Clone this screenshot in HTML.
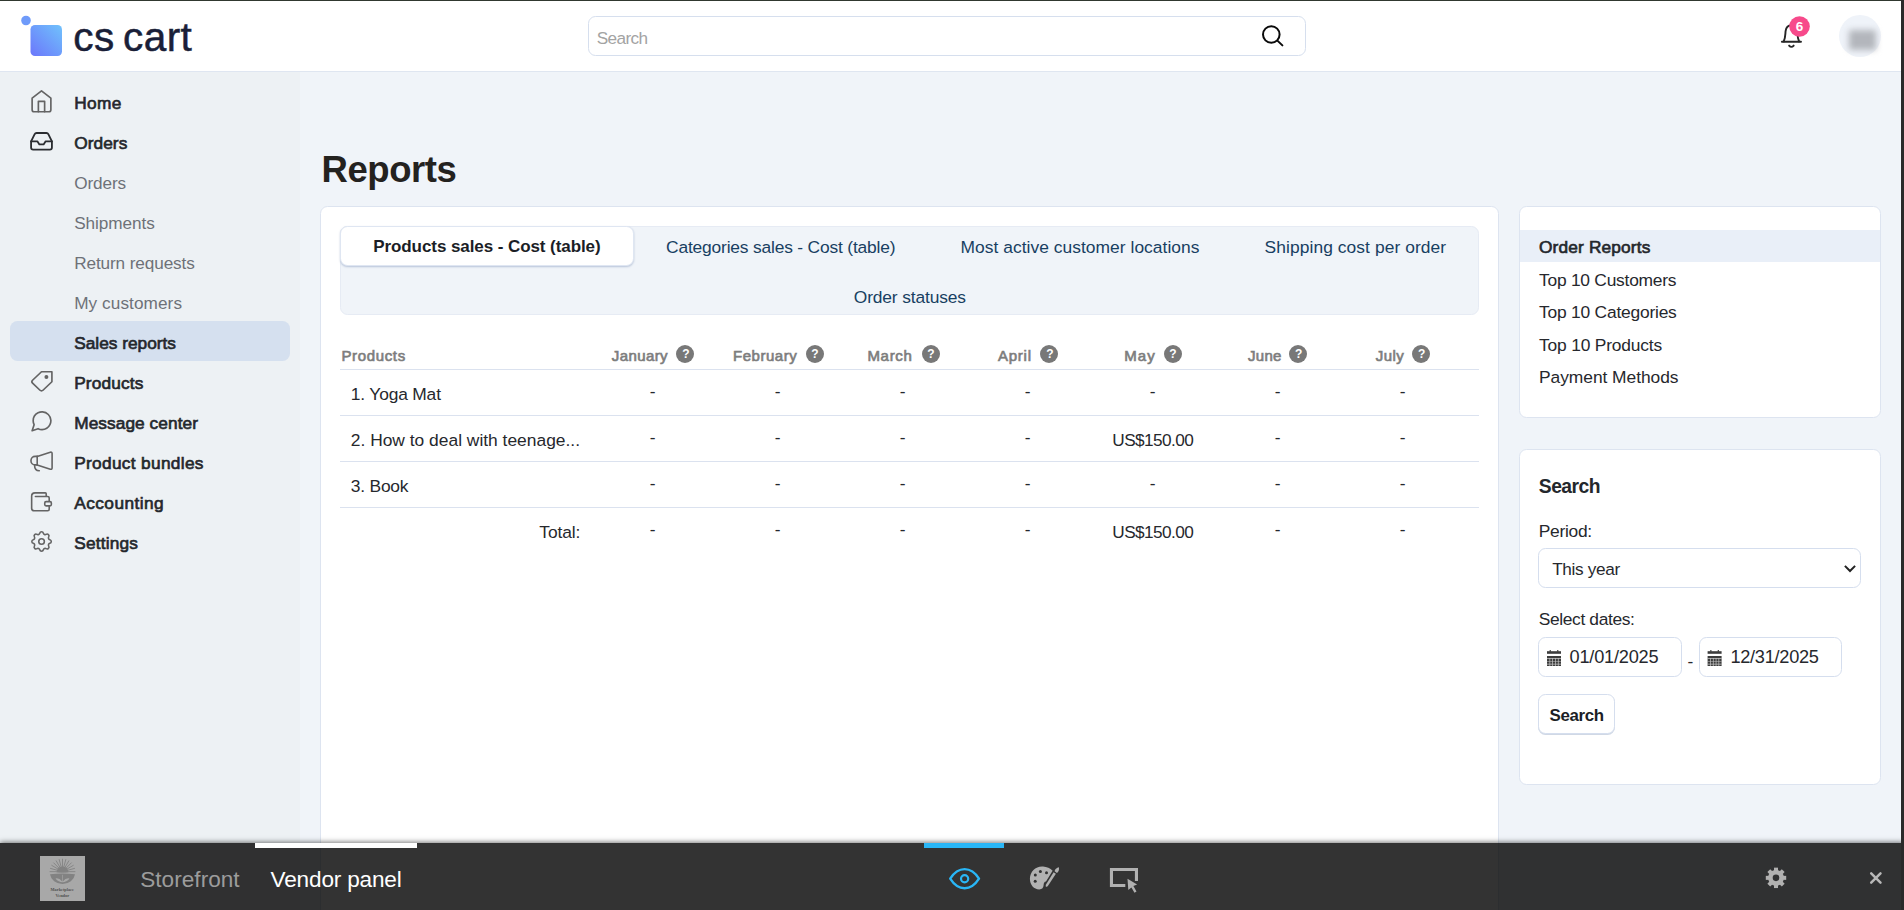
<!DOCTYPE html>
<html lang="en"><head><meta charset="utf-8"><title>Reports - CS-Cart</title>
<style>
*{box-sizing:border-box;margin:0;padding:0}
html,body{width:1904px;height:910px;overflow:hidden}
body{position:relative;background:#f0f4f9;font-family:"Liberation Sans",sans-serif;color:#222}
.abs{position:absolute}
.t{position:absolute;white-space:pre;line-height:0;font-family:"Liberation Sans",sans-serif}
#topline{left:0;top:0;width:1904px;height:1px;background:#30382f}
#rightstrip{left:1901px;top:0;width:3px;height:910px;background:#2a2a2a}
#header{left:0;top:1px;width:1901px;height:70px;background:#fff}
#hborder{left:0;top:71px;width:1901px;height:1px;background:#dfe6f1}
#sidebar{left:0;top:72px;width:300px;height:838px;background:#edf1f4}
#active{left:10px;top:321px;width:280px;height:40px;border-radius:7.5px;background:#d5e0ef}
#searchbox{left:588px;top:16px;width:718px;height:40px;border:1px solid #d6dfee;border-radius:7.5px;background:#fff}
.card{background:#fff;border:1px solid #dde4f0;border-radius:7.5px}
#maincard{left:320px;top:206px;width:1179px;height:720px}
#tabs{left:340px;top:226px;width:1139px;height:89px;background:#f0f4f9;border:1px solid #e6ebf4;border-radius:7.5px}
#tabactive{left:340px;top:226px;width:294px;height:40px;background:#fff;border:1px solid #dfe6f2;border-radius:7.5px;box-shadow:0 1px 2px rgba(100,125,170,.4)}
.hl{left:340px;width:1139px;height:1px;background:#dbe2ef}
.q{width:18px;height:18px;border-radius:50%;background:#787878;top:345px}
#p1{left:1519px;top:206px;width:362px;height:212px}
#p1hl{left:1520px;top:230px;width:360px;height:32px;background:#e9eff8}
#p2{left:1519px;top:449px;width:362px;height:336px}
.inp{background:#fff;border:1px solid #d5deee;border-radius:7.5px}
#bar{left:0;top:843px;width:1904px;height:67px;background:rgba(0,0,0,.8);box-shadow:0 -1px 5px rgba(0,0,0,.52)}

</style></head>
<body>
<div class="abs" id="header"></div>
<div class="abs" id="hborder"></div>
<div class="abs" id="sidebar"></div>
<div class="abs" id="active"></div>
<div class="abs" id="searchbox"></div>
<div class="abs card" id="maincard"></div>
<div class="abs" id="tabs"></div>
<div class="abs" id="tabactive"></div>
<div class="abs hl" style="top:369px"></div>
<div class="abs hl" style="top:415px"></div>
<div class="abs hl" style="top:461px"></div>
<div class="abs hl" style="top:507px"></div>
<div class="abs card" id="p1"></div>
<div class="abs" id="p1hl"></div>
<div class="abs card" id="p2"></div>
<div class="abs inp" style="left:1538px;top:548px;width:323px;height:40px"></div>
<div class="abs inp" style="left:1538px;top:637px;width:144px;height:40px"></div>
<div class="abs inp" style="left:1699px;top:637px;width:143px;height:40px"></div>
<div class="abs inp" style="left:1538px;top:694px;width:77px;height:40px;box-shadow:0 1px 0 rgba(100,125,170,.3)"></div>
<div class="abs q" style="left:676.4px"></div>
<div class="abs q" style="left:805.5px"></div>
<div class="abs q" style="left:921.5px"></div>
<div class="abs q" style="left:1040.4px"></div>
<div class="abs q" style="left:1163.5px"></div>
<div class="abs q" style="left:1289.3px"></div>
<div class="abs q" style="left:1412.2px"></div>
<div class="abs" style="left:1839.2px;top:15.3px;width:42px;height:42px;border-radius:50%;background:#eff3f9"></div>
<div class="abs" style="left:1849px;top:29.5px;width:27px;height:20px;background:#b3b6bc;filter:blur(3px);border-radius:2px"></div>
<svg class="abs" style="left:0;top:0" width="1904" height="910" viewBox="0 0 1904 910" fill="none" stroke-linecap="round" stroke-linejoin="round">
<defs><linearGradient id="lg" x1="0" y1="1" x2="1" y2="0"><stop offset="0" stop-color="#6b76fb"/><stop offset="1" stop-color="#70c2fc"/></linearGradient></defs>
<!-- logo -->
<circle cx="26" cy="20.5" r="4.8" fill="#6f9bfa"/>
<rect x="30.5" y="25" width="31.5" height="31" rx="4.5" fill="url(#lg)"/>
<!-- search -->
<g stroke="#0a0a0a" stroke-width="2"><circle cx="1271.3" cy="34.5" r="8.3"/><path d="M1277.4 40.6L1282.4 45.4"/></g>
<!-- bell -->
<g stroke="#262626" stroke-width="1.9"><path d="M1781.9 41.8H1801"/><path d="M1783.7 41.5C1785.6 37.5 1785.2 34 1785.6 31.2C1786.1 27.4 1788.5 25.3 1791.4 25.3C1794.3 25.3 1796.7 27.4 1797.2 31.2C1797.6 34 1797.2 37.5 1799.1 41.5"/><path d="M1789.1 45.6Q1791.4 48.2 1793.7 45.6"/></g>
<circle cx="1799.5" cy="26.5" r="10.3" fill="#f74a8b"/>
<!-- sidebar icons -->
<g stroke="#646464" stroke-width="1.6">
 <g transform="translate(29 88.8) scale(1.0417)"><path d="M3 9l9-7 9 7v11a2 2 0 0 1-2 2H5a2 2 0 0 1-2-2z"/><path d="M9 22V12h6v10"/></g>
 <g transform="translate(54 369.7) scale(-1.0417 1.0)"><path d="M20.59 13.41l-7.17 7.17a2 2 0 0 1-2.83 0L2 12V2h10l8.59 8.59a2 2 0 0 1 0 2.82z"/><circle cx="7.3" cy="7.3" r="1.9" fill="#646464" stroke="none"/></g>
 <g transform="translate(29 408.8) scale(1.0417)"><path d="M21 11.5a8.38 8.38 0 0 1-.9 3.8 8.5 8.5 0 0 1-7.6 4.7 8.38 8.38 0 0 1-3.8-.9L3 21l1.9-5.7a8.38 8.38 0 0 1-.9-3.8 8.5 8.5 0 0 1 4.7-7.6 8.38 8.38 0 0 1 3.8-.9h.5a8.48 8.48 0 0 1 8 8v.5z"/></g>
 <g stroke-width="1.6"><path d="M37.2 456.4H35.2A4.25 4.25 0 0 0 35.2 464.9H37.2"/><path d="M37.2 456.4V464.9"/><path d="M37.2 456.4L50.3 452.2Q52.1 451.7 52.1 453.6V467.8Q52.1 469.7 50.3 469.2L37.2 464.9"/><path d="M34.6 465.4C34.6 468.5 36.5 470.6 39.3 470.8"/></g>
 <g stroke-width="1.6"><path d="M46.2 496.3V493.7Q46.2 492.85 45.4 492.85H35Q31.65 492.85 31.65 496.2V508.2Q31.65 510.75 34.3 510.75H47.7Q49.2 510.75 49.2 509.3V506.6M49.2 500.9V498Q49.2 496.5 47.7 496.5H35.4"/><rect x="44.75" y="501.6" width="6.6" height="4.3" rx="1.3"/></g>
 <g transform="translate(28.6 528.55) scale(1.08)" stroke-width="1.45"><path d="M10.325 4.317c.426 -1.756 2.924 -1.756 3.35 0a1.724 1.724 0 0 0 2.573 1.066c1.543 -.94 3.31 .826 2.37 2.37a1.724 1.724 0 0 0 1.065 2.572c1.756 .426 1.756 2.924 0 3.35a1.724 1.724 0 0 0 -1.066 2.573c.94 1.543 -.826 3.31 -2.37 2.37a1.724 1.724 0 0 0 -2.572 1.065c-.426 1.756 -2.924 1.756 -3.35 0a1.724 1.724 0 0 0 -2.573 -1.066c-1.543 .94 -3.31 -.826 -2.37 -2.37a1.724 1.724 0 0 0 -1.065 -2.572c-1.756 -.426 -1.756 -2.924 0 -3.35a1.724 1.724 0 0 0 1.066 -2.573c-.94 -1.543 .826 -3.31 2.37 -2.37c1 .608 2.296 .07 2.572 -1.065z"/><circle cx="12" cy="12" r="2.6"/></g>
</g>
<g stroke="#2b2d31" stroke-width="1.75" transform="translate(29 128.8) scale(1.0417)"><path d="M22 12h-6l-2 3h-4l-2-3H2"/><path d="M5.45 5.11L2 12v6a2 2 0 0 0 2 2h16a2 2 0 0 0 2-2v-6l-3.45-6.89A2 2 0 0 0 16.76 4H7.24a2 2 0 0 0-1.79 1.11z"/></g>
<!-- select chevron -->
<path d="M1844.9 565.9L1850 571L1855.1 565.9" stroke="#222" stroke-width="2" stroke-linecap="butt" stroke-linejoin="miter"/>
<!-- calendar icons -->
<g fill="#3c3c3c" stroke="none"><rect x="1547" y="651.2" width="14" height="2.6"/><rect x="1549.6" y="650.1" width="1.3" height="1.6"/><rect x="1557.1" y="650.1" width="1.3" height="1.6"/><rect x="1547" y="656" width="14" height="10"/><path d="M1547 658.1h14v.7h-14zM1547 660.9h14v.7h-14zM1547 663.7h14v.7h-14zM1549.5 658.1h.7v7.900h-.7zM1552.3 658.1h.7v7.900h-.7zM1555.1 658.1h.7v7.900h-.7zM1557.9 658.1h.7v7.900h-.7z" fill="#fff" opacity=".7"/></g>
<g transform="translate(160.6 0)" fill="#3c3c3c" stroke="none"><rect x="1547" y="651.2" width="14" height="2.6"/><rect x="1549.6" y="650.1" width="1.3" height="1.6"/><rect x="1557.1" y="650.1" width="1.3" height="1.6"/><rect x="1547" y="656" width="14" height="10"/><path d="M1547 658.1h14v.7h-14zM1547 660.9h14v.7h-14zM1547 663.7h14v.7h-14zM1549.5 658.1h.7v7.900h-.7zM1552.3 658.1h.7v7.900h-.7zM1555.1 658.1h.7v7.900h-.7zM1557.9 658.1h.7v7.900h-.7z" fill="#fff" opacity=".7"/></g>
</svg>

<div class="abs" id="bar"></div>
<div class="abs" id="topline"></div>
<div class="abs" id="rightstrip"></div>
<svg class="abs" style="left:0;top:830px" width="1904" height="80" viewBox="0 830 1904 80" fill="none" stroke-linecap="round" stroke-linejoin="round">
<rect x="255" y="843" width="162" height="5" fill="#fff"/>
<rect x="924" y="843" width="80" height="5" fill="#29b6f6"/>
<!-- thumb -->
<rect x="40" y="856" width="45" height="45" fill="#a8a8a8"/>
<g stroke="#828282" stroke-width="0.9" stroke-linecap="butt">
<path d="M49.6 871.7H75.4M50.1 868.3L74.9 875.1M50.1 875.1L74.9 868.3M51.4 865.2L73.6 878.2M53.4 862.6L71.6 880.8M56 860.5L69 882.9M59.1 859.2L65.9 884.2M62.5 858.8V884.6M65.9 859.2L59.1 884.2M69 860.5L56 882.9M71.6 862.6L53.4 880.8M73.6 865.2L51.4 878.2"/>
</g>
<path d="M48 872.6H77V890H48z" fill="#a8a8a8"/>
<path d="M56.7 872.2A5.8 5.8 0 0 1 68.3 872.2z" fill="#828282"/>
<path d="M50 874.3Q62.5 872.6 75 874.3A12.6 11 0 0 1 50 874.3z" fill="#828282"/>
<path d="M55.5 878.5Q59 877.5 62.2 881.5V874.8L62.8 874.8V881.5Q66 877.5 69.5 878.5Q66.5 882.3 62.5 882.3Q58.500 882.3 55.5 878.5z" fill="#a8a8a8"/>
<g fill="#505050" font-family="'Liberation Serif',serif" font-weight="700" text-anchor="middle" stroke="none"><text transform="translate(62.2 891.3) scale(.43)" font-size="10" textLength="54" lengthAdjust="spacingAndGlyphs">Marketplace</text><text transform="translate(62.3 897) scale(.43)" font-size="10" textLength="32" lengthAdjust="spacingAndGlyphs">Vendor</text></g>
<!-- eye -->
<g stroke="#29b6f6" stroke-width="2.4"><path d="M950.2 878.6C954 872.6 959 869.1 964.6 869.1C970.2 869.1 975.2 872.6 979 878.6C975.2 884.6 970.2 888.2 964.6 888.2C959 888.2 954 884.6 950.2 878.6z"/><circle cx="964.6" cy="878.7" r="3.6" stroke-width="2.2"/></g>
<!-- palette -->
<g fill="#b1b1b1"><path d="M1043 866.6C1036 866 1029.900 871.500 1029.900 878.800C1029.900 885 1034 889.400 1039.200 889.400C1042.300 889.400 1043.500 887.300 1043.600 885.200C1043.700 883.200 1044.300 881.800 1046 881.600L1052.600 870.800C1050.300 868.200 1046.800 866.900 1043 866.600z"/><path d="M1053.600 872.300L1055.900 873.800L1047.700 886.200L1045.900 886.900L1045.700 884.900z"/><path d="M1054.600 871.300C1054.900 869.300 1056.600 867.800 1058.900 867.300C1059.400 869.600 1058.700 871.900 1056.900 873z"/></g>
<g fill="#323232"><circle cx="1040.400" cy="871.400" r="1.5"/><circle cx="1046.500" cy="872.700" r="1.5"/><circle cx="1035.300" cy="875.100" r="1.5"/><circle cx="1035.200" cy="881.200" r="1.5"/></g>
<!-- monitor cursor -->
<path d="M1125.300 885.450H1111.450V869.450H1136.450V881" stroke="#b1b1b1" stroke-width="3.100" stroke-linecap="butt" stroke-linejoin="miter"/>
<path d="M1127.500 878.700L1137.100 884.400L1133.400 886.100L1136.500 891.400L1134.500 892.700L1131.400 887.400L1128.300 889.900z" fill="#b1b1b1"/>
<!-- gear -->
<g transform="translate(1776 877.850)"><circle r="5.600" stroke="#b1b1b1" stroke-width="4.600"/><g fill="#b1b1b1"><rect x="-2" y="-10.200" width="4" height="4" /><rect x="-2" y="6.200" width="4" height="4"/><rect x="-10.200" y="-2" width="4" height="4"/><rect x="6.200" y="-2" width="4" height="4"/><g transform="rotate(45)"><rect x="-2" y="-10.200" width="4" height="4" /><rect x="-2" y="6.200" width="4" height="4"/><rect x="-10.200" y="-2" width="4" height="4"/><rect x="6.200" y="-2" width="4" height="4"/></g></g></g>
<!-- close -->
<path d="M1871.2 873.4L1880.5 882.7M1880.5 873.4L1871.2 882.7" stroke="#b8b8b8" stroke-width="2.5" stroke-linecap="round"/>
</svg>


<div id="texts">
<span class="t" style="left:74.20px;top:102.61px;font-size:17.3px;font-weight:400;color:#24272c;letter-spacing:0.398px;-webkit-text-stroke:0.65px #24272c;">Home</span>
<span class="t" style="left:74.20px;top:142.61px;font-size:17.3px;font-weight:400;color:#24272c;letter-spacing:0.062px;-webkit-text-stroke:0.65px #24272c;">Orders</span>
<span class="t" style="left:74.20px;top:182.64px;font-size:17.2px;font-weight:400;color:#6e7178;letter-spacing:-0.122px;">Orders</span>
<span class="t" style="left:74.20px;top:222.64px;font-size:17.2px;font-weight:400;color:#6e7178;letter-spacing:-0.058px;">Shipments</span>
<span class="t" style="left:74.20px;top:262.64px;font-size:17.2px;font-weight:400;color:#6e7178;letter-spacing:-0.120px;">Return requests</span>
<span class="t" style="left:74.20px;top:302.64px;font-size:17.2px;font-weight:400;color:#6e7178;letter-spacing:0.078px;">My customers</span>
<span class="t" style="left:74.20px;top:342.61px;font-size:17.3px;font-weight:400;color:#24272c;letter-spacing:-0.002px;-webkit-text-stroke:0.65px #24272c;">Sales reports</span>
<span class="t" style="left:74.20px;top:382.61px;font-size:17.3px;font-weight:400;color:#24272c;letter-spacing:0.150px;-webkit-text-stroke:0.65px #24272c;">Products</span>
<span class="t" style="left:74.20px;top:422.61px;font-size:17.3px;font-weight:400;color:#24272c;letter-spacing:0.060px;-webkit-text-stroke:0.65px #24272c;">Message center</span>
<span class="t" style="left:74.20px;top:462.61px;font-size:17.3px;font-weight:400;color:#24272c;letter-spacing:0.313px;-webkit-text-stroke:0.65px #24272c;">Product bundles</span>
<span class="t" style="left:74.20px;top:502.61px;font-size:17.3px;font-weight:400;color:#24272c;letter-spacing:0.448px;-webkit-text-stroke:0.65px #24272c;">Accounting</span>
<span class="t" style="left:74.20px;top:542.61px;font-size:17.3px;font-weight:400;color:#24272c;letter-spacing:0.181px;-webkit-text-stroke:0.65px #24272c;">Settings</span>
<span class="t" style="left:596.80px;top:38.14px;font-size:17.2px;font-weight:400;color:#a3a3a3;letter-spacing:-0.645px;">Search</span>
<span class="t" style="left:321.50px;top:170.35px;font-size:36.5px;font-weight:700;color:#24221f;letter-spacing:-0.417px;">Reports</span>
<span class="t" style="left:373.20px;top:247.31px;font-size:17px;font-weight:700;color:#1b1e26;letter-spacing:-0.075px;">Products sales - Cost (table)</span>
<span class="t" style="left:666.10px;top:247.17px;font-size:17.4px;font-weight:400;color:#183f62;letter-spacing:-0.183px;">Categories sales - Cost (table)</span>
<span class="t" style="left:960.50px;top:247.17px;font-size:17.4px;font-weight:400;color:#183f62;letter-spacing:0.041px;">Most active customer locations</span>
<span class="t" style="left:1264.60px;top:247.17px;font-size:17.4px;font-weight:400;color:#183f62;letter-spacing:0.078px;">Shipping cost per order</span>
<span class="t" style="left:853.80px;top:297.17px;font-size:17.4px;font-weight:400;color:#183f62;letter-spacing:-0.147px;">Order statuses</span>
<span class="t" style="left:341.40px;top:355.60px;font-size:15px;font-weight:400;color:#7d7d7d;letter-spacing:0.650px;-webkit-text-stroke:0.65px #7d7d7d;">Products</span>
<span class="t" style="left:611.80px;top:355.50px;font-size:15px;font-weight:400;color:#7d7d7d;letter-spacing:0.404px;-webkit-text-stroke:0.65px #7d7d7d;">January</span>
<span class="t" style="left:733.00px;top:355.50px;font-size:15px;font-weight:400;color:#7d7d7d;letter-spacing:0.534px;-webkit-text-stroke:0.65px #7d7d7d;">February</span>
<span class="t" style="left:867.40px;top:355.50px;font-size:15px;font-weight:400;color:#7d7d7d;letter-spacing:0.703px;-webkit-text-stroke:0.65px #7d7d7d;">March</span>
<span class="t" style="left:997.90px;top:355.50px;font-size:15px;font-weight:400;color:#7d7d7d;letter-spacing:0.797px;-webkit-text-stroke:0.65px #7d7d7d;">April</span>
<span class="t" style="left:1124.20px;top:355.50px;font-size:15px;font-weight:400;color:#7d7d7d;letter-spacing:1.085px;-webkit-text-stroke:0.65px #7d7d7d;">May</span>
<span class="t" style="left:1248.00px;top:355.50px;font-size:15px;font-weight:400;color:#7d7d7d;letter-spacing:0.292px;-webkit-text-stroke:0.65px #7d7d7d;">June</span>
<span class="t" style="left:1375.70px;top:355.50px;font-size:15px;font-weight:400;color:#7d7d7d;letter-spacing:0.453px;-webkit-text-stroke:0.65px #7d7d7d;">July</span>
<span class="t" style="left:350.80px;top:393.87px;font-size:17.4px;font-weight:400;color:#26282d;letter-spacing:-0.170px;">1. Yoga Mat</span>
<span class="t" style="left:350.80px;top:439.87px;font-size:17.4px;font-weight:400;color:#26282d;letter-spacing:0.002px;">2. How to deal with teenage...</span>
<span class="t" style="left:350.80px;top:485.87px;font-size:17.4px;font-weight:400;color:#26282d;letter-spacing:-0.212px;">3. Book</span>
<span class="t" style="left:539.30px;top:531.87px;font-size:17.4px;font-weight:400;color:#26282d;letter-spacing:-0.096px;">Total:</span>
<span class="t" style="left:649.85px;top:391.27px;font-size:17.4px;font-weight:400;color:#26282d;letter-spacing:-0.297px;">-</span>
<span class="t" style="left:774.85px;top:391.27px;font-size:17.4px;font-weight:400;color:#26282d;letter-spacing:-0.297px;">-</span>
<span class="t" style="left:899.85px;top:391.27px;font-size:17.4px;font-weight:400;color:#26282d;letter-spacing:-0.297px;">-</span>
<span class="t" style="left:1024.85px;top:391.27px;font-size:17.4px;font-weight:400;color:#26282d;letter-spacing:-0.297px;">-</span>
<span class="t" style="left:1149.85px;top:391.27px;font-size:17.4px;font-weight:400;color:#26282d;letter-spacing:-0.297px;">-</span>
<span class="t" style="left:1274.85px;top:391.27px;font-size:17.4px;font-weight:400;color:#26282d;letter-spacing:-0.297px;">-</span>
<span class="t" style="left:1399.85px;top:391.27px;font-size:17.4px;font-weight:400;color:#26282d;letter-spacing:-0.297px;">-</span>
<span class="t" style="left:649.85px;top:437.27px;font-size:17.4px;font-weight:400;color:#26282d;letter-spacing:-0.297px;">-</span>
<span class="t" style="left:774.85px;top:437.27px;font-size:17.4px;font-weight:400;color:#26282d;letter-spacing:-0.297px;">-</span>
<span class="t" style="left:899.85px;top:437.27px;font-size:17.4px;font-weight:400;color:#26282d;letter-spacing:-0.297px;">-</span>
<span class="t" style="left:1024.85px;top:437.27px;font-size:17.4px;font-weight:400;color:#26282d;letter-spacing:-0.297px;">-</span>
<span class="t" style="left:1112.30px;top:439.94px;font-size:17.2px;font-weight:400;color:#26282d;letter-spacing:-0.557px;">US$150.00</span>
<span class="t" style="left:1274.85px;top:437.27px;font-size:17.4px;font-weight:400;color:#26282d;letter-spacing:-0.297px;">-</span>
<span class="t" style="left:1399.85px;top:437.27px;font-size:17.4px;font-weight:400;color:#26282d;letter-spacing:-0.297px;">-</span>
<span class="t" style="left:649.85px;top:483.27px;font-size:17.4px;font-weight:400;color:#26282d;letter-spacing:-0.297px;">-</span>
<span class="t" style="left:774.85px;top:483.27px;font-size:17.4px;font-weight:400;color:#26282d;letter-spacing:-0.297px;">-</span>
<span class="t" style="left:899.85px;top:483.27px;font-size:17.4px;font-weight:400;color:#26282d;letter-spacing:-0.297px;">-</span>
<span class="t" style="left:1024.85px;top:483.27px;font-size:17.4px;font-weight:400;color:#26282d;letter-spacing:-0.297px;">-</span>
<span class="t" style="left:1149.85px;top:483.27px;font-size:17.4px;font-weight:400;color:#26282d;letter-spacing:-0.297px;">-</span>
<span class="t" style="left:1274.85px;top:483.27px;font-size:17.4px;font-weight:400;color:#26282d;letter-spacing:-0.297px;">-</span>
<span class="t" style="left:1399.85px;top:483.27px;font-size:17.4px;font-weight:400;color:#26282d;letter-spacing:-0.297px;">-</span>
<span class="t" style="left:649.85px;top:529.27px;font-size:17.4px;font-weight:400;color:#26282d;letter-spacing:-0.297px;">-</span>
<span class="t" style="left:774.85px;top:529.27px;font-size:17.4px;font-weight:400;color:#26282d;letter-spacing:-0.297px;">-</span>
<span class="t" style="left:899.85px;top:529.27px;font-size:17.4px;font-weight:400;color:#26282d;letter-spacing:-0.297px;">-</span>
<span class="t" style="left:1024.85px;top:529.27px;font-size:17.4px;font-weight:400;color:#26282d;letter-spacing:-0.297px;">-</span>
<span class="t" style="left:1112.30px;top:531.94px;font-size:17.2px;font-weight:400;color:#26282d;letter-spacing:-0.557px;">US$150.00</span>
<span class="t" style="left:1274.85px;top:529.27px;font-size:17.4px;font-weight:400;color:#26282d;letter-spacing:-0.297px;">-</span>
<span class="t" style="left:1399.85px;top:529.27px;font-size:17.4px;font-weight:400;color:#26282d;letter-spacing:-0.297px;">-</span>
<span class="t" style="left:1539.00px;top:247.21px;font-size:17.3px;font-weight:400;color:#24272c;letter-spacing:0.154px;-webkit-text-stroke:0.65px #24272c;">Order Reports</span>
<span class="t" style="left:1539.00px;top:279.97px;font-size:17.4px;font-weight:400;color:#26282d;letter-spacing:-0.239px;">Top 10 Customers</span>
<span class="t" style="left:1539.00px;top:312.37px;font-size:17.4px;font-weight:400;color:#26282d;letter-spacing:-0.209px;">Top 10 Categories</span>
<span class="t" style="left:1539.00px;top:344.77px;font-size:17.4px;font-weight:400;color:#26282d;letter-spacing:-0.179px;">Top 10 Products</span>
<span class="t" style="left:1539.00px;top:376.97px;font-size:17.4px;font-weight:400;color:#26282d;letter-spacing:-0.045px;">Payment Methods</span>
<span class="t" style="left:1538.80px;top:486.71px;font-size:19.3px;font-weight:700;color:#24272c;letter-spacing:-0.519px;">Search</span>
<span class="t" style="left:1538.80px;top:530.97px;font-size:17.4px;font-weight:400;color:#26282d;letter-spacing:-0.301px;">Period:</span>
<span class="t" style="left:1552.20px;top:568.64px;font-size:17.2px;font-weight:400;color:#26282d;letter-spacing:-0.321px;">This year</span>
<span class="t" style="left:1538.80px;top:618.57px;font-size:17.4px;font-weight:400;color:#26282d;letter-spacing:-0.373px;">Select dates:</span>
<span class="t" style="left:1569.60px;top:657.49px;font-size:18.2px;font-weight:400;color:#26282d;letter-spacing:-0.233px;">01/01/2025</span>
<span class="t" style="left:1730.40px;top:657.49px;font-size:18.2px;font-weight:400;color:#26282d;letter-spacing:-0.273px;">12/31/2025</span>
<span class="t" style="left:1687.55px;top:660.67px;font-size:17.4px;font-weight:400;color:#26282d;letter-spacing:-0.297px;">-</span>
<span class="t" style="left:1549.50px;top:715.94px;font-size:16.9px;font-weight:700;color:#1b1e26;letter-spacing:-0.357px;">Search</span>
<span class="t" style="left:140.20px;top:880.37px;font-size:22.6px;font-weight:400;color:#9c9c9c;letter-spacing:0.028px;">Storefront</span>
<span class="t" style="left:270.60px;top:880.37px;font-size:22.6px;font-weight:400;color:#ffffff;letter-spacing:-0.181px;">Vendor panel</span>
<span class="t" style="left:1795.80px;top:27.22px;font-size:13.5px;font-weight:700;color:#fff;letter-spacing:0.084px;">6</span>
<span class="t" style="left:73.30px;top:37.37px;font-size:40.5px;font-weight:400;color:#1a1f38;letter-spacing:0.462px;word-spacing:-3.5px;-webkit-text-stroke:0.5px #1a1f38">cs cart</span>
<span class="t" style="left:682.20px;top:354.24px;font-size:12px;font-weight:700;color:#fff;letter-spacing:-0.344px;">?</span>
<span class="t" style="left:811.30px;top:354.24px;font-size:12px;font-weight:700;color:#fff;letter-spacing:-0.344px;">?</span>
<span class="t" style="left:927.30px;top:354.24px;font-size:12px;font-weight:700;color:#fff;letter-spacing:-0.344px;">?</span>
<span class="t" style="left:1046.20px;top:354.24px;font-size:12px;font-weight:700;color:#fff;letter-spacing:-0.344px;">?</span>
<span class="t" style="left:1169.30px;top:354.24px;font-size:12px;font-weight:700;color:#fff;letter-spacing:-0.344px;">?</span>
<span class="t" style="left:1295.10px;top:354.24px;font-size:12px;font-weight:700;color:#fff;letter-spacing:-0.344px;">?</span>
<span class="t" style="left:1418.00px;top:354.24px;font-size:12px;font-weight:700;color:#fff;letter-spacing:-0.344px;">?</span>
</div>
</body></html>
